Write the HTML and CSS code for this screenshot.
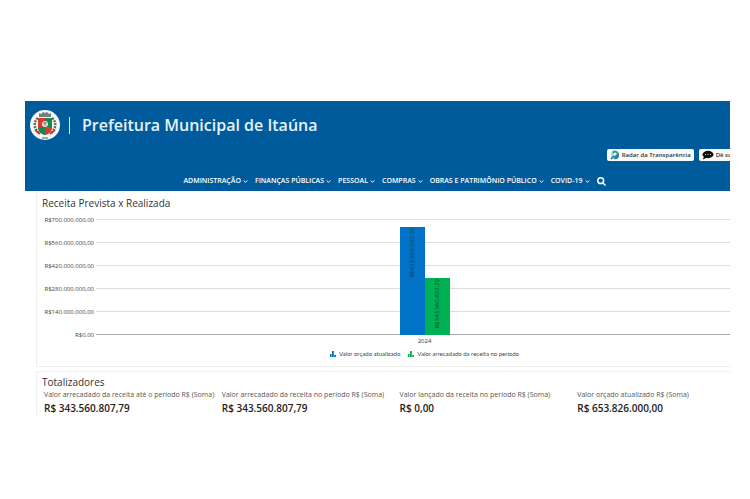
FILE: index.html
```
<!DOCTYPE html>
<html lang="pt-BR">
<head>
<meta charset="utf-8">
<title>Prefeitura Municipal de Itaúna</title>
<link rel="stylesheet" href="styles.css">
</head>
<body>
<div class="viewport">
<div class="page">
  <header class="header">
    <div class="brand">
      <svg class="crest" viewBox="0 0 30 30" aria-hidden="true">
        <circle cx="15" cy="15" r="15" fill="#f6faf8"/>
        <path d="M8 8C3 12 4 19 9 23" fill="none" stroke="#58705e" stroke-width="2.5" stroke-dasharray="2 1"/>
        <path d="M22 8C27 12 26 19 21 23" fill="none" stroke="#58705e" stroke-width="2.5" stroke-dasharray="2 1"/>
        <path d="M5 20l5 4M25 20l-5 4" stroke="#c8403c" stroke-width="2"/>
        <path d="M9 3l2 1 2-2 2 1 2-1 2 2 2-1v4H9z" fill="#77817c"/>
        <path d="M8 8h7v17c-4-1-7-4-7-8z" fill="#d93a2f"/>
        <path d="M15 8h7v9c0 4-3 7-7 8z" fill="#168a4c"/>
        <path d="M8 18l7-2v9c-4-1-6-3-7-7z" fill="#168a4c"/>
        <path d="M15 16l7 2c-1 4-3 6-7 7z" fill="#d93a2f"/>
        <circle cx="15" cy="14" r="3" fill="#e9e4df"/>
        <path d="M13 13h4M15 12v4" stroke="#8d7770"/>
        <path d="M12 28h6" stroke="#4b5a50"/>
      </svg>
      <span class="divider"></span>
      <h1 class="title">Prefeitura Municipal de Itaúna</h1>
    </div>
    <div class="actions">
      <button class="action" type="button">
        <svg class="action-icon" viewBox="0 0 10 10" aria-hidden="true">
          <circle cx="5" cy="5" r="4" fill="#a9dcd0"/>
          <path d="M2 2a4 4 0 0 1 7 2L5 5z" fill="#28a58c"/>
          <path d="M9 4a4 4 0 0 1-5 5l1-4z" fill="#2779a8"/>
          <circle cx="5" cy="4" r="1.5" fill="#f5fbfa"/>
          <path d="M4 6L1 9" stroke="#1d658f" stroke-width="1.5"/>
        </svg>
        Radar da Transparência
      </button>
      <button class="action" type="button">
        <svg class="action-icon wide" viewBox="0 0 12 10" aria-hidden="true">
          <ellipse cx="6" cy="4.5" rx="5.5" ry="3.7" fill="#111"/>
          <path d="M2 6L1 9.5l4-2z" fill="#111"/>
          <path d="M3 4.5h1M5.5 4.5h1M8 4.5h1" stroke="#ccc"/>
        </svg>
        Dê sugestão
      </button>
    </div>
    <nav class="nav">
      <a href="#">ADMINISTRAÇÃO<svg class="chev" viewBox="0 0 5 5" aria-hidden="true"><path d="M.7 1.5l1.8 1.8 1.8-1.8"/></svg></a>
      <a href="#">FINANÇAS PÚBLICAS<svg class="chev" viewBox="0 0 5 5" aria-hidden="true"><path d="M.7 1.5l1.8 1.8 1.8-1.8"/></svg></a>
      <a href="#">PESSOAL<svg class="chev" viewBox="0 0 5 5" aria-hidden="true"><path d="M.7 1.5l1.8 1.8 1.8-1.8"/></svg></a>
      <a href="#">COMPRAS<svg class="chev" viewBox="0 0 5 5" aria-hidden="true"><path d="M.7 1.5l1.8 1.8 1.8-1.8"/></svg></a>
      <a href="#">OBRAS E PATRIMÔNIO PÚBLICO<svg class="chev" viewBox="0 0 5 5" aria-hidden="true"><path d="M.7 1.5l1.8 1.8 1.8-1.8"/></svg></a>
      <a href="#">COVID-19<svg class="chev" viewBox="0 0 5 5" aria-hidden="true"><path d="M.7 1.5l1.8 1.8 1.8-1.8"/></svg></a>
      <a href="#" aria-label="Buscar"><svg class="search" viewBox="0 0 9 9" aria-hidden="true"><circle cx="3.7" cy="3.7" r="2.9"/><path d="M5.8 5.8l2.7 2.7"/></svg></a>
    </nav>
  </header>

  <main class="content">
    <section class="card chart-card">
      <h2 class="heading">Receita Prevista x Realizada</h2>
      <div class="chart">
        <div class="scale">
          <div class="tick"><span>R$700.000.000,00</span></div>
          <div class="tick"><span>R$560.000.000,00</span></div>
          <div class="tick"><span>R$420.000.000,00</span></div>
          <div class="tick"><span>R$280.000.000,00</span></div>
          <div class="tick"><span>R$140.000.000,00</span></div>
          <div class="tick base"><span>R$0,00</span></div>
        </div>
        <div class="bars">
          <div class="bar blue" style="height:93.4%">R$653.826.000,00</div>
          <div class="bar green" style="height:49.1%">R$343.560.807,79</div>
        </div>
      </div>
      <div class="year">2024</div>
      <div class="legend">
        <span class="key"><svg class="key-icon blue-key" viewBox="0 0 6 6" aria-hidden="true"><path d="M0 3h1.6v3H0zM2 0h1.8v6H2zM4.2 4H6v2H4.2z"/></svg>Valor orçado atualizado</span>
        <span class="key"><svg class="key-icon green-key" viewBox="0 0 6 6" aria-hidden="true"><path d="M0 3h1.6v3H0zM2 0h1.8v6H2zM4.2 4H6v2H4.2z"/></svg>Valor arrecadado da receita no período</span>
      </div>
    </section>

    <section class="card totals-card">
      <h2 class="heading">Totalizadores</h2>
      <dl class="totals">
        <div><dt>Valor arrecadado da receita até o período R$ (Soma)</dt><dd>R$ 343.560.807,79</dd></div>
        <div><dt>Valor arrecadado da receita no período R$ (Soma)</dt><dd>R$ 343.560.807,79</dd></div>
        <div><dt>Valor lançado da receita no período R$ (Soma)</dt><dd>R$ 0,00</dd></div>
        <div><dt>Valor orçado atualizado R$ (Soma)</dt><dd>R$ 653.826.000,00</dd></div>
      </dl>
    </section>
  </main>
</div>
</div>
</body>
</html>
```
FILE: styles.css
```
* { box-sizing: border-box; }
body {
  margin: 0;
  background: #fff;
  color: #333;
  font-family: "Open Sans", "Noto Sans", sans-serif;
}
h1, h2, dl, dd { margin: 0; }

/* The window shows the left part of a slightly wider page. */
.viewport { margin: 101px 20px 0 25px; overflow: hidden; }
.page { width: calc(100% + 34px); }

.header { background: #005b9c; color: #fff; padding: 9px 5px 4px; }
.brand { display: flex; align-items: center; height: 30px; }
.crest { width: 30px; height: 30px; }
.divider { width: 1px; height: 17px; margin: 0 12px 0 9px; background: #d5e8f5; }
.title { font-size: 16px; line-height: 20px; font-weight: 600; color: #e6f2fa; }

.actions { display: flex; justify-content: flex-end; gap: 5px; margin-top: 9px; padding-right: 5px; }
.action {
  display: flex;
  align-items: center;
  gap: 2px;
  flex: none;
  height: 12px;
  padding: 0 3px;
  border: 0;
  border-radius: 2px;
  background: #f9fbfc;
  color: #333;
  font: 600 6px/12px "Open Sans", sans-serif;
  white-space: nowrap;
}
.action-icon { width: 10px; height: 10px; }
.action-icon.wide { width: 12px; }

.nav {
  display: flex;
  justify-content: center;
  gap: 7px;
  height: 12px;
  margin-top: 14px;
}
.nav a {
  display: flex;
  align-items: center;
  gap: 2px;
  color: #fff;
  font-size: 7px;
  line-height: 12px;
  font-weight: 600;
  text-decoration: none;
  white-space: nowrap;
}
.chev { width: 5px; height: 5px; fill: none; stroke: #fff; }
.search { width: 9px; height: 9px; fill: none; stroke: #fff; stroke-width: 1.5; }

.content { display: grid; gap: 4px; padding: 0 8px 0 11px; }
.card { border: 1px solid #eee; }
.chart-card { border-top: 0; padding: 5px 0 8px 5px; }
.heading { font-size: 10px; line-height: 14px; font-weight: 400; }

.chart { display: grid; grid-template-columns: 52px 1fr; grid-template-rows: 138px; margin-top: -2px; }
.scale { grid-area: 1 / 1 / 2 / 3; }
.tick {
  display: grid;
  grid-template-columns: 52px 1fr;
  gap: 2px;
  align-items: center;
  height: 23px;
  font-size: 6px;
  line-height: 8px;
  text-align: right;
  color: #444;
}
.tick::after { content: ""; height: 1px; background: #ddd; }
.tick.base::after { background: #aaa; }
.bars {
  grid-area: 1 / 2 / 2 / 3;
  display: flex;
  justify-content: center;
  align-items: flex-end;
  margin: 11px 0;
  z-index: 1;
}
.bar {
  width: 25px;
  padding-top: 1px;
  writing-mode: sideways-lr;
  display: flex;
  align-items: center;
  justify-content: flex-end;
  font-size: 6px;
  line-height: 8px;
  color: #173b45;
}
.blue { background: #0073c8; }
.green { background: #00b053; }
.year { margin: -9px 0 0 52px; text-align: center; font-size: 6px; line-height: 8px; }
.legend { display: flex; justify-content: center; gap: 8px; margin-top: 5px; padding-left: 52px; }
.key {
  display: flex;
  align-items: center;
  gap: 3px;
  font-family: Lato, "Open Sans", sans-serif;
  font-size: 6px;
  line-height: 8px;
  color: #444;
}
.key-icon { width: 6px; height: 6px; }
.blue-key { fill: #0073b8; }
.green-key { fill: #00b053; }

.totals-card { border-bottom: 0; padding: 3px 0 0 5px; }
.totals { display: grid; grid-template-columns: repeat(4, 1fr); padding-left: 2px; }
.totals dt { font-size: 7px; line-height: 12px; color: #555; white-space: nowrap; }
.totals dd { font-size: 10px; line-height: 14px; font-weight: 600; color: #222; }
```
